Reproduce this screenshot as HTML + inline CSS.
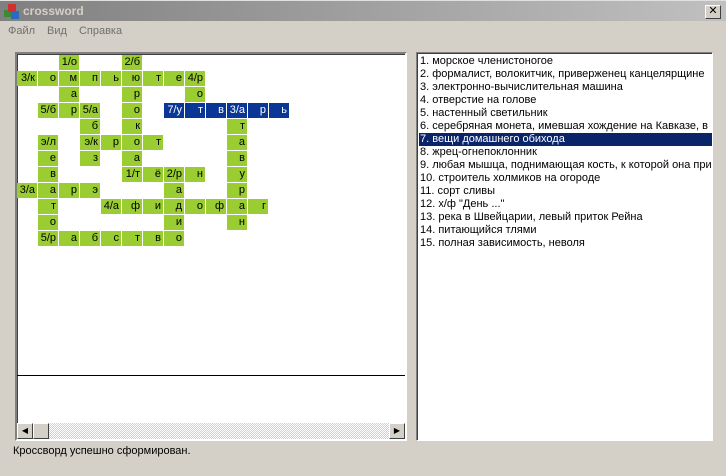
<!DOCTYPE html>
<html><head><meta charset="utf-8"><style>
*{margin:0;padding:0;box-sizing:border-box}
body{width:726px;height:476px;background:#d4d0c8;font-family:"Liberation Sans","DejaVu Sans",sans-serif;font-size:11px;position:relative;overflow:hidden}
.title{position:absolute;left:0;top:0;width:726px;height:21px;background:linear-gradient(to right,#808080,#c0c0c0);border-top:1px solid #e0e0e0}
.title span{position:absolute;left:23px;top:3px;color:#d4d0c8;font-weight:bold;font-size:12px}
.close{position:absolute;left:705px;top:4px;width:16px;height:14px;background:#d4d0c8;border:1px solid;border-color:#fff #404040 #404040 #fff;font-size:11px;font-weight:bold;text-align:center;line-height:11px}
.menu{position:absolute;top:25px;left:8px;color:#707070;font-size:11px}
.menu span{margin-right:12px}
.lp{position:absolute;left:15px;top:52px;width:392px;height:389px;background:#fff;border:2px solid;border-color:#808080 #fff #fff #808080;box-shadow:inset 1px 1px 0 #404040}
.c{position:absolute;width:20px;height:15px;background:#9acd32;text-align:right;padding-right:2px;line-height:15px;font-size:11px;color:#000}
.b{background:#0a3796;color:#fff}
.rp{position:absolute;left:416px;top:52px;width:297px;height:389px;background:#fff;border:1px solid;border-color:#808080 #fff #fff #808080;box-shadow:inset 1px 1px 0 #404040}
.li{position:absolute;left:2px;height:13px;line-height:13px;white-space:nowrap;width:293px;overflow:hidden;font-size:11px;padding-left:1px}
.sel{background:#0a246a;color:#fff}
</style></head><body>
<div class="title"><svg width="16" height="16" style="position:absolute;left:4px;top:3px"><rect x="0" y="6" width="7" height="7" fill="#3a8a3a"/><rect x="4" y="0" width="8" height="8" fill="#d03030"/><rect x="7" y="7" width="8" height="8" fill="#2a6ac0"/></svg><span>crossword</span><div class="close">✕</div></div>
<div class="menu"><span>Файл</span><span>Вид</span><span>Справка</span></div>
<div class="lp">
<div style="position:absolute;left:0;top:321px;width:388px;height:1px;background:#000"></div>
<div style="position:absolute;left:0;top:369px;width:388px;height:16px;background:repeating-conic-gradient(#d4d0c8 0 25%,#fff 0 50%) 0 0/2px 2px"></div>
<div style="position:absolute;left:0;top:369px;width:16px;height:16px;background:#d4d0c8;border:1px solid;border-color:#fff #404040 #404040 #fff;font-size:8px;text-align:center;line-height:13px">◀</div>
<div style="position:absolute;left:16px;top:369px;width:16px;height:16px;background:#d4d0c8;border:1px solid;border-color:#fff #404040 #404040 #fff"></div>
<div style="position:absolute;left:372px;top:369px;width:16px;height:16px;background:#d4d0c8;border:1px solid;border-color:#fff #404040 #404040 #fff;font-size:8px;text-align:center;line-height:13px">▶</div>
</div>
<div id="g"></div>
<div class="rp">
<div class="li" style="top:2px">1. морское членистоногое</div>
<div class="li" style="top:15px">2. формалист, волокитчик, приверженец канцелярщине</div>
<div class="li" style="top:28px">3. электронно-вычислительная машина</div>
<div class="li" style="top:41px">4. отверстие на голове</div>
<div class="li" style="top:54px">5. настенный светильник</div>
<div class="li" style="top:67px">6. серебряная монета, имевшая хождение на Кавказе, в</div>
<div class="li sel" style="top:80px">7. вещи домашнего обихода</div>
<div class="li" style="top:93px">8. жрец-огнепоклонник</div>
<div class="li" style="top:106px">9. любая мышца, поднимающая кость, к которой она при</div>
<div class="li" style="top:119px">10. строитель холмиков на огороде</div>
<div class="li" style="top:132px">11. сорт сливы</div>
<div class="li" style="top:145px">12. х/ф "День ..."</div>
<div class="li" style="top:158px">13. река в Швейцарии, левый приток Рейна</div>
<div class="li" style="top:171px">14. питающийся тлями</div>
<div class="li" style="top:184px">15. полная зависимость, неволя</div>
</div>
<div style="position:absolute;left:13px;top:445px;font-size:11px">Кроссворд успешно сформирован.</div>
<script>
var rows=[
[[2,"1/о"],[5,"2/б"]],
[[0,"3/к"],[1,"о"],[2,"м"],[3,"п"],[4,"ь"],[5,"ю"],[6,"т"],[7,"е"],[8,"4/р"]],
[[2,"а"],[5,"р"],[8,"о"]],
[[1,"5/б"],[2,"р"],[3,"5/а"],[5,"о"],[7,"7/у",1],[8,"т",1],[9,"в",1],[10,"3/а",1],[11,"р",1],[12,"ь",1]],
[[3,"б"],[5,"к"],[10,"т"]],
[[1,"э/л"],[3,"э/к"],[4,"р"],[5,"о"],[6,"т"],[10,"а"]],
[[1,"е"],[3,"з"],[5,"а"],[10,"в"]],
[[1,"в"],[5,"1/т"],[6,"ё"],[7,"2/р"],[8,"н"],[10,"у"]],
[[0,"3/а"],[1,"а"],[2,"р"],[3,"э"],[7,"а"],[10,"р"]],
[[1,"т"],[4,"4/а"],[5,"ф"],[6,"и"],[7,"д"],[8,"о"],[9,"ф"],[10,"а"],[11,"г"]],
[[1,"о"],[7,"и"],[10,"н"]],
[[1,"5/р"],[2,"а"],[3,"б"],[4,"с"],[5,"т"],[6,"в"],[7,"о"]]];
var h="";rows.forEach(function(r,i){r.forEach(function(c){h+='<div class="c'+(c[2]?' b':'')+'" style="left:'+(17+c[0]*21)+'px;top:'+(55+i*16)+'px">'+c[1]+'</div>';});});
document.getElementById("g").innerHTML=h;
</script>
</body></html>
